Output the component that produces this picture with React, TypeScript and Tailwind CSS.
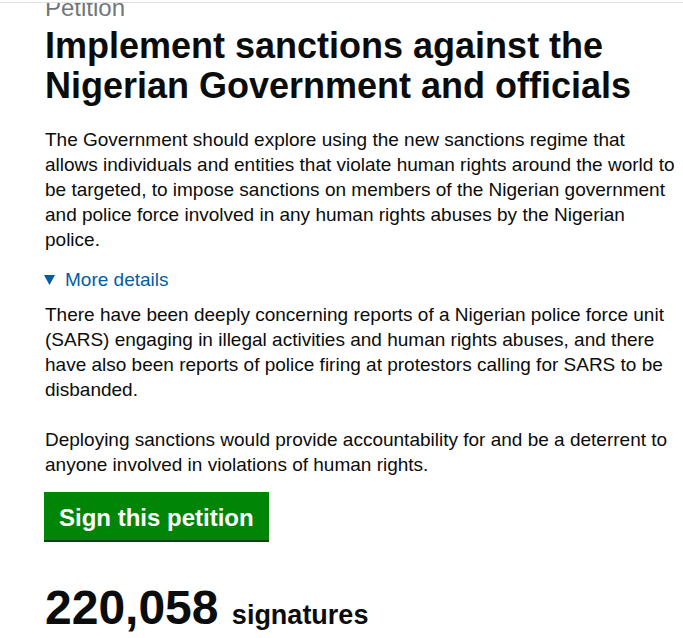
export default function App() {
  return (
    <div className="min-h-[638px] bg-white font-['Liberation_Sans',Arial,sans-serif] text-[#0b0c0c]">
      <div className="h-[2px] bg-white" />
      <div className="h-px bg-[#dee0e2]" />
      <div className="overflow-hidden pl-[45px]">
        <div className="-mt-[10px] flex w-[633px] flex-col">
          <h1>
            <span className="block text-[24px] leading-[30px] text-[#6f777b]">Petition</span>
            <span className="mt-[3px] block text-[36px] font-bold leading-[40px]">
              Implement sanctions against the Nigerian Government and officials
            </span>
          </h1>

          <p className="mt-[21px] text-[19px] leading-[25px]">
            The Government should explore using the new sanctions regime that allows individuals and
            entities that violate human rights around the world to be targeted, to impose sanctions on
            members of the Nigerian government and police force involved in any human rights abuses by
            the Nigerian police.
          </p>

          <details open className="mt-[15px]">
            <summary className="flex cursor-pointer list-none items-center gap-[10px] text-[19px] leading-[25px] text-[#005ea5] [&::-webkit-details-marker]:hidden">
              <svg width="11" height="10" viewBox="0 0 11 10" aria-hidden="true" className="-ml-px">
                <polygon points="0,0 11,0 5.5,10" fill="#005ea5" />
              </svg>
              <span>More details</span>
            </summary>
            <div className="mt-[10px] flex flex-col gap-[25px] text-[19px] leading-[25px]">
              <p>
                There have been deeply concerning reports of a Nigerian police force unit (SARS) engaging
                in illegal activities and human rights abuses, and there have also been reports of police
                firing at protestors calling for SARS to be disbanded.
              </p>
              <p>
                Deploying sanctions would provide accountability for and be a deterrent to anyone involved
                in violations of human rights.
              </p>
            </div>
          </details>

          <button className="-ml-px mt-[15px] w-fit border-b-2 border-[#00480a] bg-[#008507] px-[15px] pb-[7px] pt-[11px] text-[24px] font-bold leading-[30px] text-white">
            Sign this petition
          </button>

          <p className="mt-[38px] flex items-baseline leading-[1.15]">
            <span className="text-[48px] font-bold leading-[1.15]">220,058</span>
            <span className="text-[48px] leading-[1.15]">&nbsp;</span>
            <span className="text-[27px] font-bold leading-[1.15]">signatures</span>
          </p>
        </div>
      </div>
    </div>
  );
}
